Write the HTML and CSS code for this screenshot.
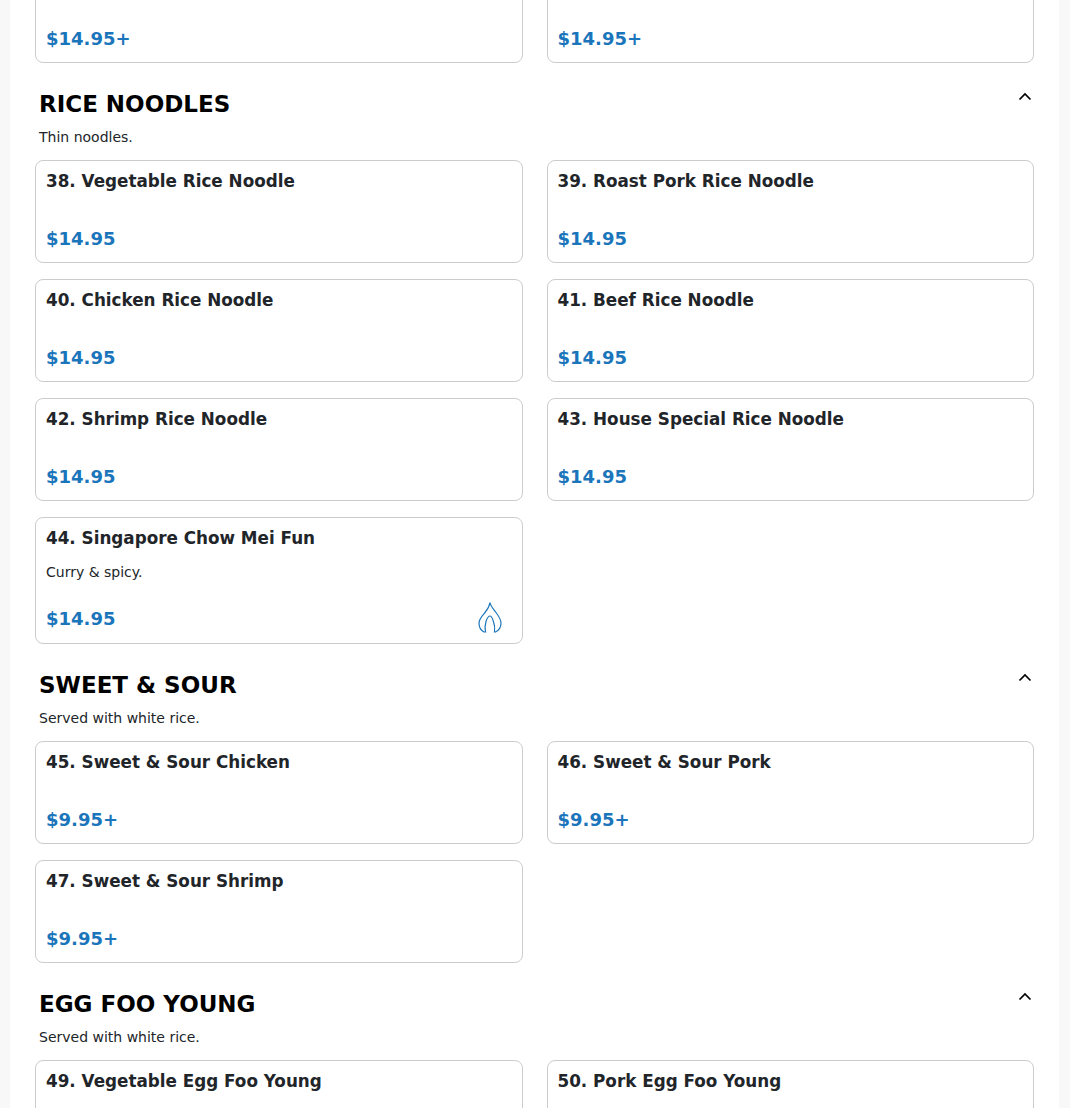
FILE: index.html
```html
<!DOCTYPE html>
<html lang="en">

<head>
  <meta charset="UTF-8">
  <meta name="viewport" content="width=device-width, initial-scale=1.0">
  <title>Menu</title>
  <link rel="stylesheet" href="styles.css">
</head>

<body>
  <main class="menu">
    <!-- end of the previous section, scrolled off the top -->
    <div class="items items-cut">
      <div class="card"><div class="name"></div><div class="price">$14.95+</div></div>
      <div class="card"><div class="name"></div><div class="price">$14.95+</div></div>
    </div>

    <section>
      <div class="section-head">
        <h2>RICE NOODLES</h2>
        <svg class="chevron" viewBox="0 0 16 16"><path d="M2.5 10.5 8 5l5.5 5.5" /></svg>
      </div>
      <p class="section-note">Thin noodles.</p>
      <div class="items">
        <div class="card"><div class="name">38. Vegetable Rice Noodle</div><div class="price">$14.95</div></div>
        <div class="card"><div class="name">39. Roast Pork Rice Noodle</div><div class="price">$14.95</div></div>
        <div class="card"><div class="name">40. Chicken Rice Noodle</div><div class="price">$14.95</div></div>
        <div class="card"><div class="name">41. Beef Rice Noodle</div><div class="price">$14.95</div></div>
        <div class="card"><div class="name">42. Shrimp Rice Noodle</div><div class="price">$14.95</div></div>
        <div class="card"><div class="name">43. House Special Rice Noodle</div><div class="price">$14.95</div></div>
        <div class="card">
          <div class="name">44. Singapore Chow Mei Fun</div>
          <div class="desc">Curry &amp; spicy.</div>
          <div class="card-foot">
            <div class="price">$14.95</div>
            <svg class="flame" viewBox="0 0 24 32">
              <path d="M12 1.500C12.500 5 15 7.500 18 11.500C21 15.500 23 18.500 23 22C23 26 20.500 29.500 17.500 31L16.500 31C17 28 16.800 24 15.300 20C14.300 17 13 15 12 15C10.500 15 9 17.500 8 20.500C7 24 6.800 28 7.500 31L6 31C3 29.500 1 26 1 22C1 18 4 15 7 11.500C9.500 8.500 11.500 5 12 1.500Z" />
            </svg>
          </div>
        </div>
      </div>
    </section>

    <section>
      <div class="section-head">
        <h2>SWEET &amp; SOUR</h2>
        <svg class="chevron" viewBox="0 0 16 16"><path d="M2.5 10.5 8 5l5.500 5.500" /></svg>
      </div>
      <p class="section-note">Served with white rice.</p>
      <div class="items">
        <div class="card"><div class="name">45. Sweet &amp; Sour Chicken</div><div class="price">$9.95+</div></div>
        <div class="card"><div class="name">46. Sweet &amp; Sour Pork</div><div class="price">$9.95+</div></div>
        <div class="card"><div class="name">47. Sweet &amp; Sour Shrimp</div><div class="price">$9.95+</div></div>
      </div>
    </section>

    <section>
      <div class="section-head">
        <h2>EGG FOO YOUNG</h2>
        <svg class="chevron" viewBox="0 0 16 16"><path d="M2.500 10.500 8 5l5.500 5.500" /></svg>
      </div>
      <p class="section-note">Served with white rice.</p>
      <div class="items">
        <div class="card"><div class="name">49. Vegetable Egg Foo Young</div></div>
        <div class="card"><div class="name">50. Pork Egg Foo Young</div></div>
      </div>
    </section>
  </main>
</body>

</html>
```

FILE: styles.css
```css
html,
body {
  height: 1108px;
  overflow: hidden;
}

body {
  margin: 0;
  background-color: #f8f8f8;
  font-family: "DejaVu Sans", sans-serif;
  color: #212529;
}

.menu {
  margin: 0 11px 0 10px;
  padding: 0 25px;
  height: 100%;
  overflow: hidden;
  background-color: #fff;
}

.items {
  display: grid;
  grid-template-columns: 1fr 1fr;
  column-gap: 24px;
  row-gap: 16px;
}

.items-cut {
  margin-top: -40px;
}

section {
  padding-top: 16px;
}

.section-head {
  display: flex;
  justify-content: space-between;
  align-items: flex-start;
  padding: 0 1px 0 4px;
}

h2 {
  margin: 11px 0 0;
  font-size: 23px;
  line-height: 29px;
  font-weight: 700;
  color: #000;
}

.chevron {
  width: 16px;
  height: 16px;
  margin-top: 10px;
  fill: none;
  stroke: #000;
  stroke-width: 1.7;
}

.section-note {
  margin: 8px 0 12px 4px;
  font-size: 14px;
  line-height: 21px;
  color: #212529;
}

.card {
  display: flex;
  flex-direction: column;
  justify-content: space-between;
  min-height: 103px;
  box-sizing: border-box;
  padding: 8px 10px 9px;
  border: 1px solid #ccc;
  border-radius: 8px;
  background-color: #fff;
}

.name {
  font-size: 16.8px;
  line-height: 24px;
  font-weight: 700;
  color: #212529;
}

.desc {
  margin-top: 12px;
  font-size: 14px;
  line-height: 21px;
}

.price {
  font-size: 18px;
  line-height: 28px;
  font-weight: 700;
  color: #1b75bb;
}

.card-foot {
  display: flex;
  justify-content: space-between;
  align-items: flex-end;
  margin-top: 18px;
}

.card-foot .price {
  margin-bottom: 1px;
}

.flame {
  width: 24px;
  height: 32px;
  margin-right: 10px;
  margin-bottom: 1px;
  fill: none;
  stroke: #1b75bb;
  stroke-width: 1.2;
}
```
